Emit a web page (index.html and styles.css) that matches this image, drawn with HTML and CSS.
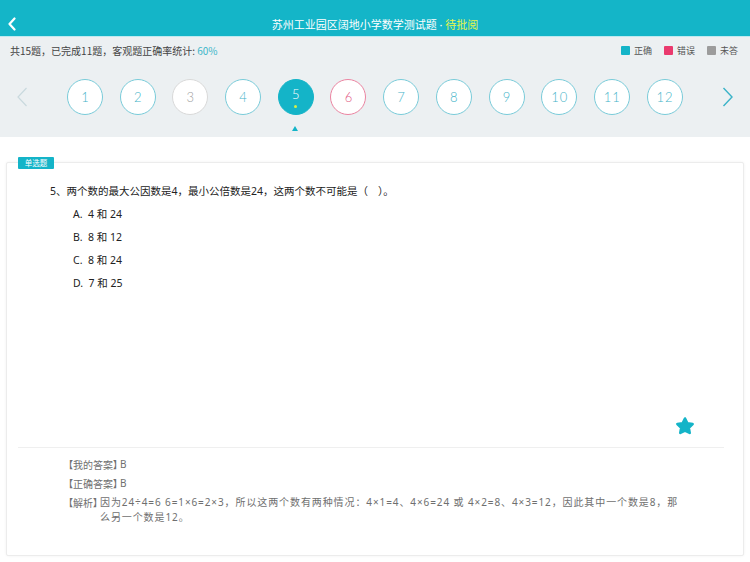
FILE: index.html
```html
<!DOCTYPE html>
<html lang="zh">
<head>
<meta charset="utf-8">
<title>苏州工业园区阔地小学数学测试题</title>
<link rel="stylesheet" href="styles.css">
</head>
<body>
<header class="topbar">
  <button class="back" aria-label="返回">
    <svg width="10" height="14" viewBox="0 0 10 14"><path d="M7.5 1.5 L2.5 7 L7.5 12.5" fill="none" stroke="#fff" stroke-width="2.2" stroke-linecap="round" stroke-linejoin="round"/></svg>
  </button>
  <h1 class="title">苏州工业园区阔地小学数学测试题<span class="dot"> · </span><span class="status">待批阅</span></h1>
  <span class="spacer"></span>
</header>

<section class="nav">
  <div class="stats-row">
    <p class="stats">共15题，已完成11题，客观题正确率统计: <span class="rate">60%</span></p>
    <ul class="legend">
      <li><i class="sq sq-right"></i>正确</li>
      <li><i class="sq sq-wrong"></i>错误</li>
      <li><i class="sq sq-none"></i>未答</li>
    </ul>
  </div>
  <div class="pager">
    <button class="arrow prev" aria-label="上一页">
      <svg width="12" height="20" viewBox="0 0 12 20"><path d="M10.5 1 L2 10 L10.5 19" fill="none" stroke="#c9d9de" stroke-width="1.2"/></svg>
    </button>
    <ol class="nums">
      <li class="num">1</li>
      <li class="num">2</li>
      <li class="num unanswered">3</li>
      <li class="num">4</li>
      <li class="num current">5</li>
      <li class="num wrong">6</li>
      <li class="num">7</li>
      <li class="num">8</li>
      <li class="num">9</li>
      <li class="num">10</li>
      <li class="num">11</li>
      <li class="num">12</li>
    </ol>
    <button class="arrow next" aria-label="下一页">
      <svg width="12" height="20" viewBox="0 0 12 20"><path d="M1.5 1 L10 10 L1.5 19" fill="none" stroke="#3bb3c8" stroke-width="1.4"/></svg>
    </button>
  </div>
</section>

<main class="content">
  <article class="card">
    <span class="tag">单选题</span>
    <div class="q-body">
      <p class="q-text">5、两个数的最大公因数是4，最小公倍数是24，这两个数不可能是（<span class="blank"></span>）。</p>
      <ul class="options">
        <li>A.&nbsp; 4 和 24</li>
        <li>B.&nbsp; 8 和 12</li>
        <li>C.&nbsp; 8 和 24</li>
        <li>D.&nbsp; 7 和 25</li>
      </ul>
      <svg class="star" width="24" height="24" viewBox="0 0 24 24"><path d="M12 4.5 L14.35 9.26 L19.61 10.03 L15.8 13.74 L16.7 18.97 L12 16.5 L7.3 18.97 L8.2 13.74 L4.39 10.03 L9.65 9.26 Z" fill="#14b4c8" stroke="#14b4c8" stroke-width="2.6" stroke-linejoin="round"/></svg>
    </div>
    <div class="divider"></div>
    <div class="answers">
      <p class="ans-row"><span class="label">【我的答案】</span><span>B</span></p>
      <p class="ans-row"><span class="label">【正确答案】</span><span>B</span></p>
      <p class="ans-row"><span class="label">【解析】</span><span class="explain">因为24÷4=6 6=1×6=2×3，所以这两个数有两种情况：4×1=4、4×6=24 或 4×2=8、4×3=12，因此其中一个数是8，那么另一个数是12。</span></p>
    </div>
  </article>
</main>
</body>
</html>
```

FILE: styles.css
```css
* { box-sizing: border-box; }
html, body { margin: 0; padding: 0; }
body {
  width: 750px;
  height: 562px;
  display: flex;
  flex-direction: column;
  background: #ffffff;
  font-family: "Noto Sans", "Noto Sans CJK SC", sans-serif;
  color: #333;
  overflow: hidden;
}
ul, ol, p, h1 { margin: 0; padding: 0; list-style: none; }
button { border: 0; background: none; padding: 0; margin: 0; cursor: pointer; }

/* header */
.topbar {
  height: 37px;
  flex: none;
  background: #14b5c8;
  border-bottom: 1px solid #bfeaf0;
  display: grid;
  grid-template-columns: 1fr auto 1fr;
  align-items: center;
  padding-top: 12px;
}
.back {
  justify-self: start;
  margin-left: 5px;
  width: 14px;
  height: 20px;
  display: flex;
  align-items: center;
  justify-content: center;
}
.back svg { display: block; }
.title {
  font-family: "Noto Sans CJK SC", sans-serif;
  font-weight: 400;
  font-size: 11px;
  color: #ffffff;
  line-height: 20px;
}
.dot { font-family: "Noto Sans", sans-serif; }
.status { color: #e8f54b; }

/* nav band */
.nav {
  flex: none;
  height: 100px;
  background: #ecf0f2;
  display: flex;
  flex-direction: column;
}
.stats-row {
  height: 26px;
  display: flex;
  align-items: center;
  justify-content: space-between;
  padding: 0 12px 0 10px;
}
.stats {
  font-family: "Noto Sans CJK SC", sans-serif;
  font-size: 10px;
  color: #444;
}
.rate { color: #3cb6c9; }
.legend {
  display: flex;
  gap: 12px;
  font-family: "Noto Sans CJK SC", sans-serif;
  font-size: 9px;
  color: #555;
}
.legend li { display: flex; align-items: center; gap: 4px; }
.sq { display: block; width: 9px; height: 9px; border-radius: 1px; }
.sq-right { background: #14b4c8; }
.sq-wrong { background: #ea3a6e; }
.sq-none { background: #9c9c9c; }

.pager {
  margin-top: 16px;
  height: 36px;
  display: flex;
  align-items: center;
}
.arrow {
  width: 44px;
  height: 36px;
  display: flex;
  align-items: center;
  justify-content: center;
  flex: none;
}
.arrow svg { display: block; }
.nums {
  flex: 1;
  display: flex;
  gap: 16.7px;
  padding: 0 23px;
}
.num {
  position: relative;
  width: 36px;
  height: 36px;
  flex: none;
  border-radius: 50%;
  border: 1px solid #79cbd9;
  background: #ffffff;
  color: #45b4c9;
  font-family: "Lato", "Noto Sans", sans-serif;
  font-weight: 300;
  font-size: 13px;
  letter-spacing: 1px;
  text-indent: 1px;
  display: flex;
  align-items: center;
  justify-content: center;
}
.num.unanswered { border-color: #d9d9d9; color: #9f9f9f; }
.num.wrong { border-color: #eb84a1; color: #e2567f; }
.num.current {
  background: #14b4c8;
  border-color: #14b4c8;
  color: #ffffff;
  padding-bottom: 6px;
}
.num.current::before {
  content: "";
  position: absolute;
  left: 50%;
  top: 25px;
  width: 3px;
  height: 3px;
  margin-left: -1.5px;
  border-radius: 50%;
  background: #d6ef45;
}
.num.current::after {
  content: "";
  position: absolute;
  left: 50%;
  top: 46px;
  margin-left: -3.5px;
  border-left: 3.5px solid transparent;
  border-right: 3.5px solid transparent;
  border-bottom: 5px solid #14b4c8;
}

/* content */
.content {
  flex: 1;
  display: flex;
  flex-direction: column;
  padding: 25px 6px 6px;
}
.card {
  position: relative;
  flex: 1;
  display: flex;
  flex-direction: column;
  background: #ffffff;
  border: 1px solid #ececec;
  border-radius: 2px;
  box-shadow: 0 0 3px rgba(0, 0, 0, 0.06);
}
.tag {
  position: absolute;
  top: -6px;
  left: 11px;
  width: 36px;
  height: 12px;
  border-radius: 1px;
  background: #14b4c8;
  color: #ffffff;
  font-family: "Noto Sans CJK SC", sans-serif;
  font-size: 7.5px;
  line-height: 12px;
  text-align: center;
}
.q-body {
  height: 284px;
  display: flex;
  flex-direction: column;
  padding: 17px 0 0 43px;
  font-family: "Noto Sans", "Noto Sans CJK SC", sans-serif;
  font-size: 10.5px;
  color: #222;
}
.q-text { line-height: 23px; }
.blank { display: inline-block; width: 10px; }
.options { margin-left: 23px; }
.options li { line-height: 23px; }
.star {
  display: block;
  margin-top: auto;
  margin-bottom: 9px;
  align-self: flex-end;
  margin-right: 46px;
}
.divider {
  height: 1px;
  background: #efefef;
  margin: 0 19px 0 11px;
}
.answers {
  padding: 9px 0 0 61px;
  display: flex;
  flex-direction: column;
  gap: 4px;
  font-family: "Noto Sans", "Noto Sans CJK SC", sans-serif;
  font-size: 10px;
  color: #6f6f6f;
}
.ans-row { display: flex; line-height: 15px; }
.label {
  flex: none;
  font-family: "Noto Sans CJK SC", sans-serif;
  font-feature-settings: "palt";
  margin-right: 2px;
}
.explain { width: 583px; letter-spacing: 0.9px; }
```
